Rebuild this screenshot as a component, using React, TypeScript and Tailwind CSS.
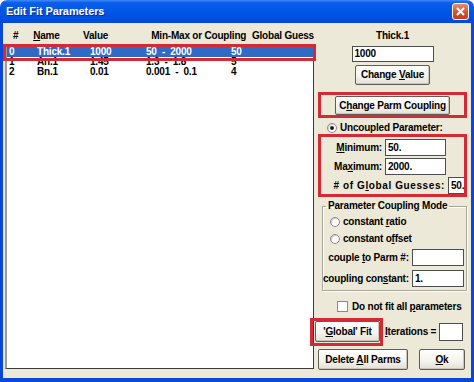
import React from "react";

const U = ({ children }: { children: React.ReactNode }) => (
  <span className="underline decoration-1 underline-offset-[1px]">{children}</span>
);

function Btn({ className = "", children }: { className?: string; children: React.ReactNode }) {
  return (
    <div
      className={
        "flex items-center justify-center rounded-[2px] border border-[#5f5d55] bg-[linear-gradient(to_bottom,#ffffff_0%,#f3f2ec_60%,#e3e0d4_100%)] shadow-[inset_-1px_-1px_0_#c9c6b8] " +
        className
      }
    >
      <span className="whitespace-pre">{children}</span>
    </div>
  );
}

function Field({ className = "", value = "" }: { className?: string; value?: string }) {
  return (
    <div className={"flex shrink-0 items-center bg-white border border-[#4d4d4d] pl-[2px] " + className}>
      {value}
    </div>
  );
}

function Radio({ checked = false }: { checked?: boolean }) {
  return (
    <div className="flex h-[10px] w-[10px] shrink-0 items-center justify-center rounded-full border border-[#8a8a8a] bg-white shadow-[inset_1px_1px_0_#d4d0c8]">
      {checked && <div className="h-[4px] w-[4px] rounded-full bg-[#1e1e1e]" />}
    </div>
  );
}

export default function App() {
  return (
    <div className="relative flex h-[382px] w-[474px] flex-col whitespace-nowrap font-['Liberation_Sans',Arial,sans-serif] text-black">
      {/* ── Title bar ──────────────────────────── */}
      <div className="flex h-[23px] items-center rounded-t-[7px] bg-[linear-gradient(to_bottom,#3f8cf3_0%,#0a5ded_12%,#0055e5_55%,#0049d8_100%)] pl-[6px] pr-[5px]">
        <span className="text-[11px] font-bold tracking-[-0.1px] text-white [text-shadow:1px_1px_0_#0a2a8a]">
          Edit Fit Parameters
        </span>
        <div className="ml-auto flex h-[17px] w-[17px] items-center justify-center rounded-[3px] border border-white bg-[linear-gradient(to_bottom,#e98a6c,#d4502d_60%,#c43d1c)]">
          <svg width="9" height="9" viewBox="0 0 9 9">
            <path d="M1 1 L8 8 M8 1 L1 8" stroke="white" strokeWidth="2" />
          </svg>
        </div>
      </div>

      {/* ── Body ───────────────────────────────── */}
      <div className="flex flex-1 border-x-[3px] border-b-[4px] border-[#0a47d8] bg-[#ECE9D8] text-[10px] font-bold leading-[10px] tracking-[-0.2px]">
        {/* Parameter list */}
        <div className="ml-[2px] flex w-[309px] flex-col">
          <div className="flex h-[21px] pl-[8px] pt-[8px]">
            <span className="w-[21px]">#</span>
            <span className="w-[52px]">
              <U>N</U>ame
            </span>
            <span className="w-[71px]">Value</span>
            <span className="w-[105px]">Min-Max or Coupling</span>
            <span>Global Guess</span>
          </div>
          <div className="h-[325px] border-t-2 border-l-2 border-r border-b border-t-[#808080] border-l-[#9c9c9c] border-r-[#3a3a3a] border-b-[#3a3a3a] bg-white pt-[1px]">
            {[
              ["0", "Thick.1", "1000", "50  -  2000", "50"],
              ["1", "An.1", "1.45", "1.3  -  1.8", "5"],
              ["2", "Bn.1", "0.01", "0.001  -  0.1", "4"],
            ].map((r, i) => (
              <div
                key={i}
                className={
                  "flex h-[10px] whitespace-pre pl-[2px] " +
                  (i === 0 ? "bg-[#316AC5] text-white" : "")
                }
              >
                <span className="w-[28px]">{r[0]}</span>
                <span className="w-[53px]">{r[1]}</span>
                <span className="w-[56px]">{r[2]}</span>
                <span className="w-[85px]">{r[3]}</span>
                <span>{r[4]}</span>
              </div>
            ))}
          </div>
        </div>

        {/* Controls */}
        <div className="ml-[4px] flex w-[149px] flex-col">
          <div className="mt-[8px] h-[10px] text-center">Thick.1</div>
          <Field className="mx-auto mt-[5px] h-[16px] w-[82px]" value="1000" />
          <Btn className="mx-auto mt-[3px] h-[20px] w-[75px]">
            Change <U>V</U>alue
          </Btn>
          <Btn className="mx-auto mt-[11px] h-[19px] w-[115px]">
            C<U>h</U>ange Parm Coupling
          </Btn>

          <div className="mt-[8px] flex h-[10px] items-center gap-[3px] pl-[9px]">
            <Radio checked />
            <span>Uncoupled Parameter:</span>
          </div>

          <div className="mt-[6px] flex h-[17px] items-center justify-end gap-[3px] pr-[21px]">
            <span>
              <U>M</U>inimum:
            </span>
            <Field className="h-[17px] w-[61px]" value="50." />
          </div>
          <div className="mt-[2px] flex h-[17px] items-center justify-end gap-[3px] pr-[21px]">
            <span>
              Ma<U>x</U>imum:
            </span>
            <Field className="h-[17px] w-[61px]" value="2000." />
          </div>
          <div className="mt-[2px] flex h-[17px] items-center justify-end gap-[3px] pr-[2px]">
            <span className="tracking-[0.6px]">
              # of G<U>l</U>obal Guesses:
            </span>
            <Field className="h-[17px] w-[17px]" value="50." />
          </div>

          <fieldset className="ml-[4px] mr-[1px] mt-[7px] border border-[#a7a69c] pb-[3px] shadow-[1px_1px_0_#ffffff,inset_1px_1px_0_#ffffff]">
            <legend className="ml-[3px] h-[10px] px-[2px]">Parameter Coupling Mode</legend>
            <div className="mt-[6px] flex h-[10px] items-center gap-[3px] pl-[7px]">
              <Radio />
              <span>
                constant <U>r</U>atio
              </span>
            </div>
            <div className="mt-[7px] flex h-[10px] items-center gap-[3px] pl-[7px]">
              <Radio />
              <span>
                constant o<U>f</U>fset
              </span>
            </div>
            <div className="mt-[5px] flex h-[17px] items-center justify-end gap-[3px] pr-[2px]">
              <span>
                couple <U>t</U>o Parm #:
              </span>
              <Field className="h-[17px] w-[52px]" />
            </div>
            <div className="mt-[4px] flex h-[17px] items-center justify-end gap-[3px] pr-[2px]">
              <span>
                coupling con<U>s</U>tant:
              </span>
              <Field className="h-[17px] w-[52px]" value="1." />
            </div>
          </fieldset>

          <div className="mt-[10px] flex h-[11px] items-center gap-[4px] pl-[19px]">
            <div className="h-[11px] w-[11px] border border-[#8a8a8a] bg-white" />
            <span>
              Do not fit all <U>p</U>arameters
            </span>
          </div>

          <div className="mt-[9px] flex h-[21px] items-center">
            <Btn className="-ml-[3px] h-[21px] w-[65px]">
              '<U>G</U>lobal' Fit
            </Btn>
            <span className="ml-[5px]">
              <U>I</U>terations =
            </span>
            <Field className="ml-auto mr-[4px] h-[18px] w-[24px]" />
          </div>

          <div className="mt-[7px] flex h-[21px]">
            <Btn className="h-[21px] w-[90px]">
              Delete <U>A</U>ll Parms
            </Btn>
            <Btn className="ml-auto mr-[2px] h-[21px] w-[46px]">
              <U>O</U>k
            </Btn>
          </div>
        </div>
      </div>

      {/* ── Red annotation boxes ───────────────── */}
      <div className="pointer-events-none absolute left-[3px] top-[44px] h-[17px] w-[313px] border-[3px] border-[#D42A36]" />
      <div className="pointer-events-none absolute left-[318px] top-[92px] h-[26px] w-[149px] border-[3px] border-[#D42A36]" />
      <div className="pointer-events-none absolute left-[318px] top-[134px] h-[63px] w-[149px] border-[3px] border-[#D42A36]" />
      <div className="pointer-events-none absolute left-[310px] top-[318px] h-[28px] w-[73px] border-[3px] border-[#D42A36]" />
    </div>
  );
}
